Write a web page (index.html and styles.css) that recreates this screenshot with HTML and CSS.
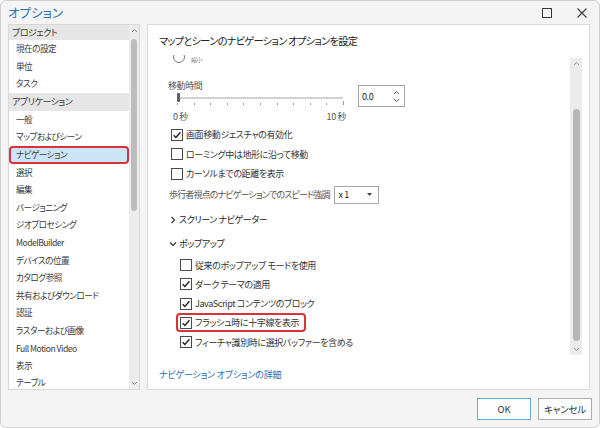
FILE: index.html
```html
<!DOCTYPE html>
<html lang="ja">
<head>
<meta charset="utf-8">
<title>オプション</title>
<link rel="stylesheet" href="styles.css">
</head>
<body>
<div class="window">
  <header class="titlebar">
    <span class="title">オプション</span>
    <div class="controls">
      <svg class="ctl" width="10" height="10" viewBox="0 0 10 10"><rect x="0.5" y="0.5" width="9" height="9" fill="none" stroke="#3a3a3a" stroke-width="1"/></svg>
      <svg class="ctl" width="10" height="10" viewBox="0 0 10 10"><path d="M0.5 0.5 L9.5 9.5 M9.5 0.5 L0.5 9.5" stroke="#3a3a3a" stroke-width="1.1" fill="none"/></svg>
    </div>
  </header>

  <div class="main">
    <nav class="sidebar">
      <ul class="list">
        <li class="group first">プロジェクト</li>
        <li class="item">現在の設定</li>
        <li class="item">単位</li>
        <li class="item">タスク</li>
        <li class="group">アプリケーション</li>
        <li class="item">一般</li>
        <li class="item">マップおよびシーン</li>
        <li class="item selected">ナビゲーション</li>
        <li class="item">選択</li>
        <li class="item">編集</li>
        <li class="item">バージョニング</li>
        <li class="item">ジオプロセシング</li>
        <li class="item">ModelBuilder</li>
        <li class="item">デバイスの位置</li>
        <li class="item">カタログ参照</li>
        <li class="item">共有およびダウンロード</li>
        <li class="item">認証</li>
        <li class="item">ラスターおよび画像</li>
        <li class="item">Full Motion Video</li>
        <li class="item">表示</li>
        <li class="item last">テーブル</li>
      </ul>
      <div class="vscroll side-scroll">
        <svg class="arrow" width="7" height="5" viewBox="0 0 7 5"><path d="M1 4 L3.5 1.5 L6 4" stroke="#8a8a8a" fill="none" stroke-width="1"/></svg>
        <div class="track side-track"><div class="thumb side-thumb"></div></div>
        <svg class="arrow" width="7" height="5" viewBox="0 0 7 5"><path d="M1 1 L3.5 3.5 L6 1" stroke="#8a8a8a" fill="none" stroke-width="1"/></svg>
      </div>
    </nav>

    <section class="panel">
      <h1 class="panel-title">マップとシーンのナビゲーション オプションを設定</h1>
      <div class="scroll-area">
        <div class="scroll-content">
          <div class="radio-row">
            <span class="radio"></span>
            <span class="radio-text">縮小</span>
          </div>

          <div class="slider-row">
            <div class="slider-col">
              <div class="field-label">移動時間</div>
              <div class="track-line">
                <span class="slider-thumb"></span>
                <span class="slider-rail"></span>
              </div>
              <div class="ticks">
                <i></i><i></i><i></i><i></i><i></i><i></i><i></i><i></i><i></i><i></i><i class="end"></i>
              </div>
              <div class="scale"><span>0 秒</span><span>10 秒</span></div>
            </div>
            <div class="numbox">
              <span class="num">0.0</span>
              <span class="spin">
                <svg width="7" height="5" viewBox="0 0 7 5"><path d="M1 4 L3.5 1.5 L6 4" stroke="#555" fill="none" stroke-width="1"/></svg>
                <svg width="7" height="5" viewBox="0 0 7 5"><path d="M1 1 L3.5 3.5 L6 1" stroke="#555" fill="none" stroke-width="1"/></svg>
              </span>
            </div>
          </div>

          <label class="check-row first-check">
            <svg class="cb" width="12" height="12" viewBox="0 0 12 12"><rect x="0.5" y="0.5" width="11" height="11" fill="#fff" stroke="#4a4a4a"/><path d="M2.7 6.2 L4.9 8.4 L9.4 3.3" stroke="#1f1f1f" stroke-width="1.4" fill="none"/></svg>
            <span>画面移動ジェスチャの有効化</span>
          </label>
          <label class="check-row">
            <svg class="cb" width="12" height="12" viewBox="0 0 12 12"><rect x="0.5" y="0.5" width="11" height="11" fill="#fff" stroke="#4a4a4a"/></svg>
            <span>ローミング中は地形に沿って移動</span>
          </label>
          <label class="check-row">
            <svg class="cb" width="12" height="12" viewBox="0 0 12 12"><rect x="0.5" y="0.5" width="11" height="11" fill="#fff" stroke="#4a4a4a"/></svg>
            <span>カーソルまでの距離を表示</span>
          </label>

          <div class="speed-row">
            <span class="speed-label">歩行者視点のナビゲーションでのスピード強調</span>
            <span class="dropdown"><span>x 1</span><svg width="5" height="3" viewBox="0 0 5 3"><path d="M0 0 L5 0 L2.5 3 Z" fill="#444"/></svg></span>
          </div>

          <div class="section-row nav-row">
            <svg class="chev" width="8" height="8" viewBox="0 0 8 8"><path d="M2.5 1 L5.5 4 L2.5 7" stroke="#333" stroke-width="1.2" fill="none"/></svg>
            <span>スクリーン ナビゲーター</span>
          </div>
          <div class="section-row">
            <svg class="chev" width="8" height="8" viewBox="0 0 8 8"><path d="M1 2.5 L4 5.5 L7 2.5" stroke="#333" stroke-width="1.2" fill="none"/></svg>
            <span>ポップアップ</span>
          </div>

          <label class="check-row sub">
            <svg class="cb" width="12" height="12" viewBox="0 0 12 12"><rect x="0.5" y="0.5" width="11" height="11" fill="#fff" stroke="#4a4a4a"/></svg>
            <span>従来のポップアップ モードを使用</span>
          </label>
          <label class="check-row sub">
            <svg class="cb" width="12" height="12" viewBox="0 0 12 12"><rect x="0.5" y="0.5" width="11" height="11" fill="#fff" stroke="#4a4a4a"/><path d="M2.7 6.2 L4.9 8.4 L9.4 3.3" stroke="#1f1f1f" stroke-width="1.4" fill="none"/></svg>
            <span>ダーク テーマの適用</span>
          </label>
          <label class="check-row sub">
            <svg class="cb" width="12" height="12" viewBox="0 0 12 12"><rect x="0.5" y="0.5" width="11" height="11" fill="#fff" stroke="#4a4a4a"/><path d="M2.7 6.2 L4.9 8.4 L9.4 3.3" stroke="#1f1f1f" stroke-width="1.4" fill="none"/></svg>
            <span>JavaScript コンテンツのブロック</span>
          </label>
          <div class="check-row sub">
            <label class="highlight">
              <svg class="cb" width="12" height="12" viewBox="0 0 12 12"><rect x="0.5" y="0.5" width="11" height="11" fill="#fff" stroke="#4a4a4a"/><path d="M2.7 6.2 L4.9 8.4 L9.4 3.3" stroke="#1f1f1f" stroke-width="1.4" fill="none"/></svg>
              <span>フラッシュ時に十字線を表示</span>
            </label>
          </div>
          <label class="check-row sub">
            <svg class="cb" width="12" height="12" viewBox="0 0 12 12"><rect x="0.5" y="0.5" width="11" height="11" fill="#fff" stroke="#4a4a4a"/><path d="M2.7 6.2 L4.9 8.4 L9.4 3.3" stroke="#1f1f1f" stroke-width="1.4" fill="none"/></svg>
            <span>フィーチャ識別時に選択バッファーを含める</span>
          </label>
        </div>
        <div class="vscroll panel-scroll">
          <svg class="arrow" width="7" height="5" viewBox="0 0 7 5"><path d="M1 4 L3.5 1.5 L6 4" stroke="#8a8a8a" fill="none" stroke-width="1"/></svg>
          <div class="track panel-track"><div class="thumb panel-thumb"></div></div>
          <svg class="arrow" width="7" height="5" viewBox="0 0 7 5"><path d="M1 1 L3.5 3.5 L6 1" stroke="#8a8a8a" fill="none" stroke-width="1"/></svg>
        </div>
      </div>
      <div class="link-area"><a class="more-link">ナビゲーション オプションの詳細</a></div>
    </section>
  </div>

  <footer class="footer">
    <button class="btn primary">OK</button>
    <button class="btn">キャンセル</button>
  </footer>
</div>
</body>
</html>
```

FILE: styles.css
```css
* { box-sizing: border-box; margin: 0; padding: 0; }
html, body { width: 600px; height: 428px; overflow: hidden; background: #ffffff; }
body {
  font-family: "Noto Sans CJK JP", "Noto Sans", sans-serif;
  font-size: 9px;
  letter-spacing: -0.4px;
  color: #333;
  font-feature-settings: "palt";
}
ul { list-style: none; }

.window {
  width: 600px;
  height: 428px;
  background: #f4f4f4;
  border: 1px solid #cfcfcf;
  border-radius: 6px;
  display: flex;
  flex-direction: column;
  overflow: hidden;
}

/* title bar */
.titlebar {
  height: 23px;
  display: flex;
  align-items: center;
  justify-content: space-between;
  padding: 0 12px 0 7px;
}
.title { color: #2b73b2; font-size: 12.5px; line-height: 16px; letter-spacing: 0; }
.controls { display: flex; align-items: center; gap: 25px; }
.ctl { display: block; }

/* main */
.main {
  height: 366px;
  display: flex;
  gap: 7px;
  padding: 0 9px 0 7px;
}

/* sidebar */
.sidebar {
  width: 132px;
  background: #fff;
  border: 1px solid #d8d8d8;
  display: flex;
  overflow: hidden;
}
.list { flex: 1; overflow: hidden; font-size: 8.6px; letter-spacing: -0.5px; }
.list li { white-space: nowrap; color: #3a3a3a; }
.group {
  height: 18px;
  line-height: 18px;
  background: #e6e6e6;
  padding-left: 3px;
  color: #222;
  font-size: 9px;
}
.group.first { height: 15px; line-height: 15px; }
.item { height: 17.6px; line-height: 17.6px; padding-left: 7px; }
.item.last { line-height: 15px; }
.item.selected {
  background: #cde4f6;
  border: 2px solid #d8323c;
  border-radius: 4px;
  padding-left: 5px;
  line-height: 13.6px;
}

.vscroll {
  width: 10px;
  background: #ececec;
  display: flex;
  flex-direction: column;
  align-items: center;
}
.vscroll .arrow { display: block; margin: 3px 0; flex: none; }
.track { flex: 1; width: 100%; display: flex; flex-direction: column; align-items: center; }
.thumb { width: 6px; background: #bdbdbd; border-radius: 3px; }
.side-track { padding-top: 3px; }
.side-thumb { height: 172px; }

/* panel */
.panel {
  flex: 1;
  background: #fff;
  border: 1px solid #dadada;
  display: flex;
  flex-direction: column;
}
.panel-title {
  height: 30px;
  padding: 8px 0 0 11px;
  font-size: 10.2px;
  letter-spacing: -0.7px;
  font-weight: normal;
  line-height: 16px;
  color: #222;
}
.scroll-area {
  height: 302px;
  display: flex;
}
.scroll-content {
  flex: 1;
  overflow: hidden;
  padding-left: 20px;
  display: flex;
  flex-direction: column;
}
.panel-scroll {
  width: 12px;
  margin: 3px 7px 2px 0;
}
.panel-track { padding-top: 40px; }
.panel-thumb { width: 7px; height: 232px; background: #b6b6b6; border-radius: 3.5px; }

.radio-row {
  height: 12px;
  margin-top: -4px;
  margin-left: 5px;
  display: flex;
  align-items: flex-end;
  gap: 6px;
  flex: none;
}
.radio {
  width: 12px;
  height: 12px;
  border: 1px solid #777;
  border-radius: 50%;
  background: #fff;
}
.radio-text { font-size: 6px; line-height: 7px; color: #888; }

.slider-row { display: flex; margin-top: 15px; flex: none; }
.slider-col { width: 180px; }
.field-label { height: 16px; line-height: 16px; color: #555; }
.track-line {
  margin-left: 9px;
  width: 166px;
  height: 7px;
  display: flex;
  align-items: center;
}
.slider-thumb { width: 3px; height: 9px; background: #606060; border-radius: 1px; flex: none; }
.slider-rail { flex: 1; height: 2px; background: #d2d2d2; }
.ticks {
  margin-left: 9px;
  width: 167px;
  height: 4px;
  display: flex;
  justify-content: space-between;
  align-items: flex-end;
}
.ticks i { display: block; width: 1px; height: 2px; background: #9a9a9a; }
.ticks i.end { height: 4px; }
.scale {
  margin-top: 5px;
  margin-left: 5px;
  width: 173px;
  height: 14px;
  line-height: 14px;
  display: flex;
  justify-content: space-between;
  color: #555;
}
.numbox {
  margin-left: 10px;
  margin-top: 7px;
  width: 47px;
  height: 22px;
  border: 1px solid #a6a6a6;
  background: #fff;
  display: flex;
  align-items: center;
  justify-content: space-between;
  padding: 0 4px 0 3px;
}
.num { color: #222; }
.spin { display: flex; flex-direction: column; gap: 3px; }
.spin svg { display: block; }

.check-row {
  height: 19.5px;
  display: flex;
  align-items: center;
  gap: 3px;
  margin-left: 3px;
  flex: none;
  color: #333;
}
.first-check { margin-top: 1px; }
.cb { display: block; flex: none; }
.check-row.sub { height: 19.25px; margin-left: 12px; }
.highlight {
  display: flex;
  align-items: center;
  gap: 3px;
  height: 19px;
  border: 2px solid #d8323c;
  border-radius: 4px;
  padding: 0 5px 0 2px;
  margin-left: -4px;
}

.speed-row {
  height: 22px;
  display: flex;
  align-items: center;
  gap: 4px;
  margin-left: 1px;
  flex: none;
}
.speed-label { flex: none; color: #555; white-space: nowrap; letter-spacing: -0.85px; }
.dropdown {
  width: 45px;
  height: 18px;
  border: 1px solid #a9a9a9;
  display: flex;
  align-items: center;
  justify-content: space-between;
  padding: 0 6px 0 4px;
  background: #fff;
  color: #222;
  flex: none;
}
.dropdown svg { display: block; }

.section-row {
  height: 24px;
  display: flex;
  align-items: center;
  gap: 2px;
  margin-left: 1px;
  flex: none;
  color: #222;
}
.nav-row { margin-top: 2px; }
.chev { display: block; flex: none; }

.link-area { flex: 1; padding: 11px 0 0 11px; }
.more-link { color: #2a6eb0; line-height: 14px; text-decoration: none; letter-spacing: -0.2px; }

/* footer */
.footer {
  flex: 1;
  display: flex;
  align-items: center;
  justify-content: flex-end;
  gap: 7px;
  padding-right: 7px;
}
.btn {
  width: 54px;
  height: 22px;
  font-family: inherit;
  font-size: 9.5px;
  letter-spacing: -0.2px;
  font-feature-settings: "palt";
  color: #333;
  background: #fdfdfd;
  border: 1px solid #acacac;
}
.btn.primary { border-color: #67acd9; }
```
